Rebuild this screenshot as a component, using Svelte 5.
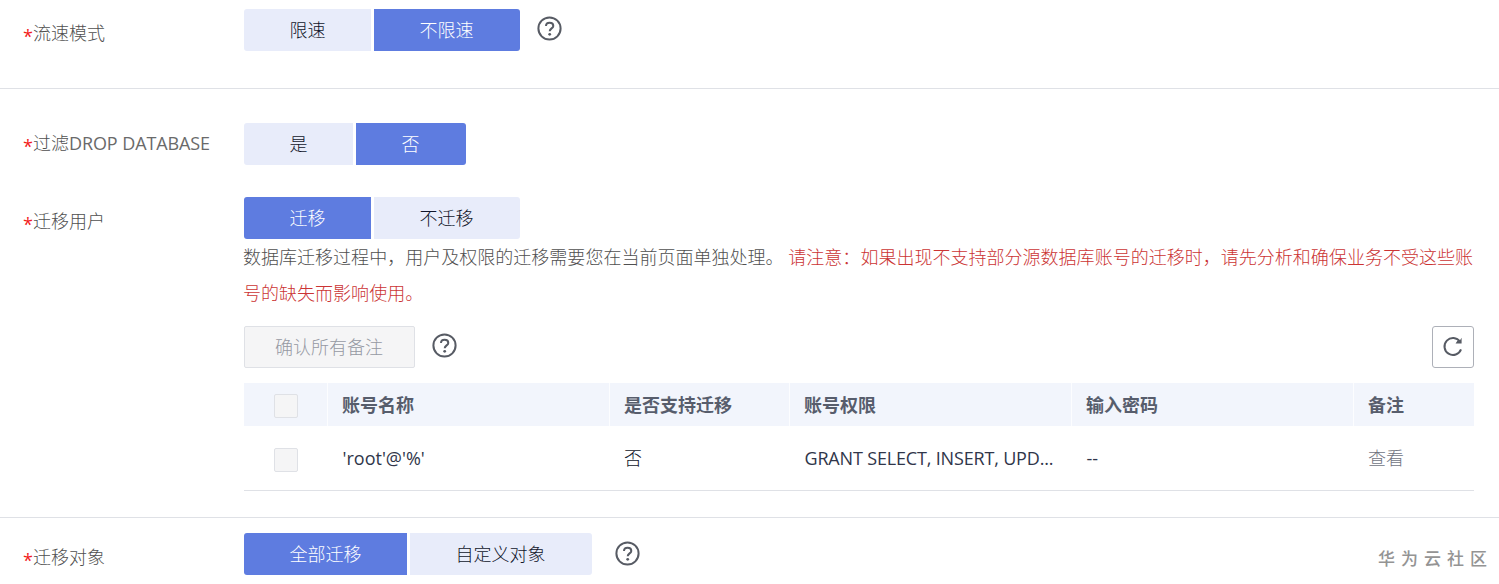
<script>
  const headers = ['账号名称', '是否支持迁移', '账号权限', '输入密码', '备注'];
</script>

{#snippet label(text, latin = '')}
  <div class="label"><span class="star">*</span><span>{text}<span class="caps">{latin}</span></span></div>
{/snippet}

{#snippet segmented(options, active)}
  <div class="segmented">
    {#each options as option, i}
      <button class:active={i === active}>{option}</button>
    {/each}
  </div>
{/snippet}

{#snippet help()}
  <svg class="help" width="26" height="26" viewBox="0 0 26 26" fill="none" aria-hidden="true">
    <circle cx="12.5" cy="12.5" r="11.1" stroke="#575b64" stroke-width="2" />
    <path d="M9 10.1C9 8 10.4 6.8 12.6 6.8s3.7 1.2 3.7 3.1c0 2.4-3.6 2.6-3.6 5.4" stroke="#575b64" stroke-width="2" />
    <circle cx="12.7" cy="18.3" r="1.4" fill="#575b64" />
  </svg>
{/snippet}

<main>
  <section class="speed">
    {@render label('流速模式')}
    <div class="control">
      {@render segmented(['限速', '不限速'], 1)}
      {@render help()}
    </div>
  </section>

  <section class="options">
    {@render label('过滤', 'DROP DATABASE')}
    <div class="control">
      {@render segmented(['是', '否'], 1)}
    </div>

    {@render label('迁移用户')}
    <div class="users">
      {@render segmented(['迁移', '不迁移'], 0)}
      <p>数据库迁移过程中，用户及权限的迁移需要您在当前页面单独处理。 <span class="warning">请注意：如果出现不支持部分源数据库账号的迁移时，请先分析和确保业务不受这些账号的缺失而影响使用。</span></p>
      <div class="toolbar">
        <button class="confirm" disabled>确认所有备注</button>
        {@render help()}
        <button class="refresh" aria-label="刷新">
          <svg width="24" height="24" viewBox="0 0 24 24" fill="none">
            <path d="M19 6.6A8.5 8.5 0 1 0 20 14.4" stroke="#575b64" stroke-width="2" />
            <path d="M20.6 2.8v5.8h-6l1.6-2.5h2.3z" fill="#575b64" />
          </svg>
        </button>
      </div>
      <div class="table">
        <div class="row head">
          <div class="check"><i></i></div>
          {#each headers as header}
            <div>{header}</div>
          {/each}
        </div>
        <div class="row body">
          <div class="check"><i></i></div>
          <div><span class="account">'root'@'%'</span></div>
          <div>否</div>
          <div><span class="grants">GRANT SELECT, INSERT, UPD...</span></div>
          <div><span class="account">--</span></div>
          <div class="view">查看</div>
        </div>
      </div>
    </div>
  </section>

  <section class="objects">
    {@render label('迁移对象')}
    <div class="control">
      {@render segmented(['全部迁移', '自定义对象'], 0)}
      {@render help()}
      <div class="community">华为云社区</div>
    </div>
  </section>
</main>

<style>
  :global(body) {
    margin: 0;
    background: #fff;
  }
  main {
    box-sizing: border-box;
    height: 584px;
    overflow: hidden;
    font: 300 18px/26px 'Open Sans', 'Noto Sans CJK SC', sans-serif;
    color: #575d6c;
  }
  section {
    box-sizing: border-box;
    display: grid;
    grid-template-columns: 244px 1230px;
    align-items: start;
  }
  .speed {
    height: 89px;
    padding-top: 9px;
    border-bottom: 1px solid #dfe1e6;
  }
  .options {
    height: 429px;
    padding-top: 34px;
    grid-template-rows: 42px auto;
    row-gap: 32px;
    border-bottom: 1px solid #dfe1e6;
  }
  .objects {
    height: 66px;
    padding-top: 15px;
  }
  .label {
    display: flex;
    padding: 11px 0 0 23px;
    color: #505050;
    white-space: nowrap;
  }
  .options .label:first-child {
    padding-top: 7px;
  }
  .star {
    width: 10px;
    color: #f21c1c;
    font-weight: 400;
    position: relative;
    top: 3px;
  }
  .caps,
  .account,
  .grants {
    font-weight: 400;
  }
  .caps {
    letter-spacing: -0.1px;
    color: #6a6a6a;
  }
  .grants {
    letter-spacing: -0.17px;
  }
  .account,
  .grants {
    color: #30364a;
    margin-left: 0.5px;
  }
  .control,
  .toolbar {
    display: flex;
    align-items: flex-start;
  }
  .segmented {
    display: flex;
    gap: 3px;
  }
  button {
    box-sizing: border-box;
    margin: 0;
    border: 0;
    font: inherit;
    height: 42px;
  }
  .segmented button {
    padding: 0 46.5px 0 45.5px;
    background: #e8ecfa;
    color: #10152a;
    border-radius: 0 3px 3px 0;
  }
  .segmented button:first-child {
    padding-right: 45.5px;
    border-radius: 3px 0 0 3px;
  }
  .segmented .active {
    background: #5e7ce0;
    color: #fff;
  }
  .help {
    flex: none;
    margin: 7px 0 0 17px;
  }
  .objects .help {
    margin: 8px 0 0 22.5px;
  }
  p {
    margin: 0 0 0 -1px;
    line-height: 36px;
    height: 72px;
    color: #505050;
    letter-spacing: 0.02px;
  }
  .warning {
    color: #cb3434;
  }
  .toolbar {
    margin-top: 15px;
  }
  .confirm {
    width: 171px;
    padding: 0 1px 1px 0;
    border: 1px solid #dfe1e6;
    border-radius: 2px;
    background: #f5f5f6;
    color: #9599a3;
  }
  .refresh {
    display: grid;
    place-items: center;
    width: 42px;
    padding: 0;
    margin-left: auto;
    border: 1px solid #adb0b8;
    border-radius: 3px;
    background: #fff;
  }
  .table {
    margin-top: 15px;
  }
  .row {
    display: grid;
    grid-template-columns: 84px 282px 180px 282px 282px 120px;
    align-items: center;
  }
  .head {
    height: 43px;
    background: #f2f5fc;
    font-weight: 700;
  }
  .row > div {
    padding-left: 14px;
    white-space: nowrap;
  }
  .head > div {
    box-sizing: border-box;
    height: 43px;
    padding-top: 9px;
    border-right: 1px solid #fcfdff;
  }
  .head > div:last-child {
    border-right: 0;
  }
  .body {
    height: 64px;
    border-bottom: 1px solid #dfe1e6;
    color: #10152a;
  }
  .row > .check {
    padding-left: 30px;
  }
  .check i {
    box-sizing: border-box;
    display: block;
    width: 24px;
    height: 24px;
    border: 1px solid #dfe1e6;
    border-radius: 2px;
    background: #f5f5f6;
  }
  .head .check i {
    margin-top: 2px;
  }
  .body .check i {
    margin-top: 3px;
  }
  .row > .view {
    color: #70747f;
  }
  .community {
    margin: 13px -19px 0 auto;
    font-size: 17px;
    font-weight: 500;
    letter-spacing: 6px;
    color: #949494;
  }
</style>
